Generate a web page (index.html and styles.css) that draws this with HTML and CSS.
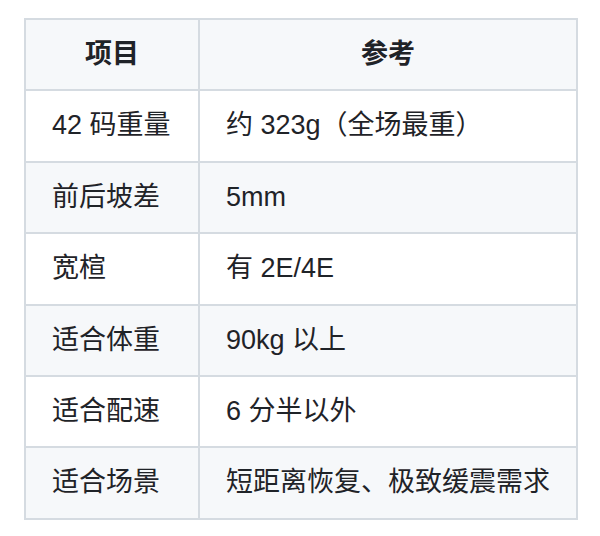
FILE: index.html
```html
<!DOCTYPE html>
<html lang="zh-CN">
<head>
<meta charset="utf-8">
<link rel="stylesheet" href="styles.css">
</head>
<body>
<table class="spec">
  <thead>
    <tr><th>项目</th><th>参考</th></tr>
  </thead>
  <tbody>
    <tr><td>42 码重量</td><td>约 323g（全场最重）</td></tr>
    <tr><td>前后坡差</td><td>5mm</td></tr>
    <tr><td>宽楦</td><td>有 2E/4E</td></tr>
    <tr><td>适合体重</td><td>90kg 以上</td></tr>
    <tr><td>适合配速</td><td>6 分半以外</td></tr>
    <tr><td>适合场景</td><td>短距离恢复、极致缓震需求</td></tr>
  </tbody>
</table>
</body>
</html>
```
FILE: styles.css
```css
html, body {
  margin: 0;
  background: #ffffff;
}
body {
  padding: 18px 22px 0 24px;
  font-family: "Liberation Sans", "Noto Sans CJK SC", sans-serif;
  font-size: 27px;
  color: #1f2328;
}
.spec {
  border-collapse: collapse;
  width: 554px;
}
.spec th,
.spec td {
  border: 2px solid #d5dbe1;
  padding: 15px 26px;
  line-height: 39.4px;
  text-align: left;
  white-space: nowrap;
}
.spec th {
  font-weight: 700;
  text-align: center;
  background: #f6f8fa;
}
.spec td:first-child {
  width: 122px;
}
.spec tbody tr:nth-child(even) {
  background: #f6f8fa;
}
.spec tbody tr:nth-child(odd) {
  background: #ffffff;
}
```
